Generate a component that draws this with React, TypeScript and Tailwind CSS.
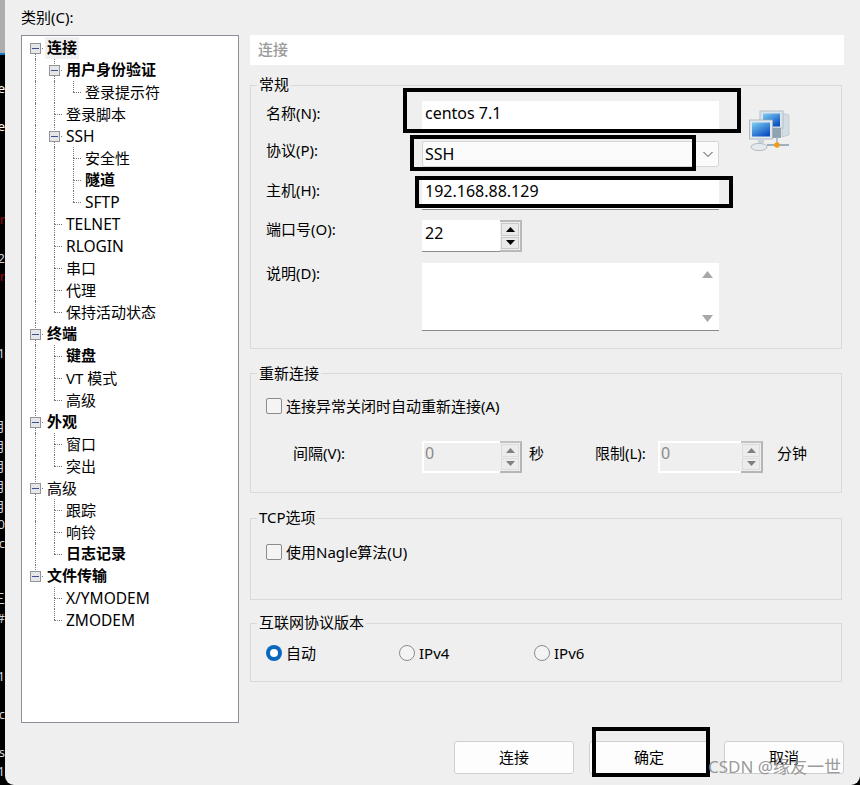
import type { ReactNode } from "react";

type Node = { label: string; bold?: boolean; selected?: boolean; latin?: boolean; children?: Node[] };

const tree: Node[] = [
  {
    label: "连接",
    bold: true,
    selected: true,
    children: [
      { label: "用户身份验证", bold: true, children: [{ label: "登录提示符" }] },
      { label: "登录脚本" },
      {
        label: "SSH",
        latin: true,
        children: [{ label: "安全性" }, { label: "隧道", bold: true }, { label: "SFTP", latin: true }],
      },
      { label: "TELNET", latin: true },
      { label: "RLOGIN", latin: true },
      { label: "串口" },
      { label: "代理" },
      { label: "保持活动状态" },
    ],
  },
  {
    label: "终端",
    bold: true,
    children: [{ label: "键盘", bold: true }, { label: "VT 模式" }, { label: "高级" }],
  },
  { label: "外观", bold: true, children: [{ label: "窗口" }, { label: "突出" }] },
  { label: "高级", children: [{ label: "跟踪" }, { label: "响铃" }, { label: "日志记录", bold: true }] },
  {
    label: "文件传输",
    bold: true,
    children: [
      { label: "X/YMODEM", latin: true },
      { label: "ZMODEM", latin: true },
    ],
  },
];

const terminalBits = [
  { y: 80, t: "e", c: "text-white" },
  { y: 118, t: "e", c: "text-white" },
  { y: 211, t: "r", c: "text-red-800" },
  { y: 250, t: "2", c: "text-gray-300" },
  { y: 268, t: "r", c: "text-red-800" },
  { y: 345, t: "1", c: "text-gray-300" },
  { y: 418, t: "月", c: "text-gray-300" },
  { y: 438, t: "月", c: "text-gray-300" },
  { y: 458, t: "月", c: "text-gray-300" },
  { y: 478, t: "月", c: "text-gray-300" },
  { y: 498, t: "月", c: "text-gray-300" },
  { y: 516, t: "0", c: "text-gray-300" },
  { y: 535, t: "c", c: "text-gray-300" },
  { y: 590, t: "三", c: "text-gray-300" },
  { y: 610, t: "#", c: "text-gray-300" },
  { y: 668, t: "1", c: "text-gray-300" },
  { y: 706, t: "c", c: "text-gray-300" },
  { y: 744, t: "s", c: "text-gray-300" },
  { y: 763, t: "1", c: "text-gray-300" },
];

const INDENT = [35, 54, 73];

function TreeRows({ nodes, level, guides }: { nodes: Node[]; level: number; guides: number[] }) {
  return (
    <>
      {nodes.map((n, i) => {
        const last = i === nodes.length - 1;
        const x = INDENT[level];
        return (
          <div key={n.label + i}>
            <div className="relative h-[22px]">
              {guides.map((g) => (
                <span key={g} className="absolute top-0 bottom-0 border-l border-dotted border-[#777]" style={{ left: g - 22 }} />
              ))}
              {(level > 0 || i > 0) && (
                <span className="absolute top-0 h-[11px] border-l border-dotted border-[#777]" style={{ left: x - 22 }} />
              )}
              {!last && (
                <span className="absolute top-[11px] bottom-0 border-l border-dotted border-[#777]" style={{ left: x - 22 }} />
              )}
              <span
                className="absolute top-[11px] w-[8px] border-t border-dotted border-[#777]"
                style={{ left: x - 22 }}
              />
              {n.children && (
                <span
                  className="absolute top-[6px] w-[11px] h-[11px] border border-[#949494] bg-[#e4e6ea] flex items-center justify-center"
                  style={{ left: x - 27 }}
                >
                  <span className="w-[7px] h-px bg-[#3f4f8f]" />
                </span>
              )}
              <span
                className={
                  "absolute top-0 h-[22px] whitespace-nowrap text-black " +
                  (n.bold ? "font-bold leading-[20px] " : "leading-[22px] ") +
                  (n.latin ? "text-[15.5px] " : "") +
                  (n.selected ? "bg-[#f0f0f0] px-[2px] -ml-[2px]" : "")
                }
                style={{ left: x - 10 }}
              >
                {n.label}
              </span>
            </div>
            {n.children && <TreeRows nodes={n.children} level={level + 1} guides={last ? guides : [...guides, x]} />}
          </div>
        );
      })}
    </>
  );
}

function Group({ title, className, legend, children }: { title: string; className: string; legend: string; children: ReactNode }) {
  return (
    <div className={"relative w-[592px] border border-[#d9d9d9] " + className}>
      <span className={"absolute left-[6px] h-[20px] leading-[20px] bg-[#efefef] px-[2px] whitespace-nowrap " + legend}>{title}</span>
      {children}
    </div>
  );
}

function Arrow({ up, disabled }: { up?: boolean; disabled?: boolean }) {
  return (
    <svg width="9" height="5" viewBox="0 0 9 5" className={disabled ? "text-[#808080]" : "text-black"}>
      <path d={up ? "M4.5 0 9 5H0z" : "M0 0h9L4.5 5z"} fill="currentColor" />
    </svg>
  );
}

function Spinner({ disabled }: { disabled?: boolean }) {
  return (
    <div
      className={
        "w-[22px] h-full shrink-0 flex flex-col gap-px p-px border-2 border-l-0 " +
        (disabled ? "border-[#b5b5b5] border-t-[#c2c2c2]" : "border-[#b9b9b9]")
      }
    >
      <div className={"flex-1 flex items-center justify-center border " + (disabled ? "bg-[#ececec] border-[#dcdcdc]" : "bg-[#e9e9e9] border-[#c9c9c9]")}>
        <Arrow up disabled={disabled} />
      </div>
      <div className={"flex-1 flex items-center justify-center border " + (disabled ? "bg-[#ececec] border-[#dcdcdc]" : "bg-[#e9e9e9] border-[#c9c9c9]")}>
        <Arrow disabled={disabled} />
      </div>
    </div>
  );
}

function DisabledNumber({ w }: { w: string }) {
  return (
    <div className="flex h-[32px]">
      <div className={"border-2 border-r-0 border-white bg-[#efefef] text-[16px] text-[#8a8a8a] pl-[1px] leading-[20px] " + w}>0</div>
      <Spinner disabled />
    </div>
  );
}

function Check({ label }: { label: string }) {
  return (
    <div className="flex items-center h-[16px] gap-[4px]">
      <span className="w-[16px] h-[16px] rounded-[2px] border border-[#8c8c8c] bg-[#f4f4f4]" />
      <span className="whitespace-nowrap leading-[16px]">{label}</span>
    </div>
  );
}

function Radio({ label, on, w }: { label: string; on?: boolean; w?: string }) {
  return (
    <div className={"flex items-center h-[16px] gap-[4px] " + (w ?? "")}>
      {on ? (
        <span className="w-[16px] h-[16px] rounded-full bg-[#0a67c0] flex items-center justify-center">
          <span className="w-[8px] h-[8px] rounded-full bg-white" />
        </span>
      ) : (
        <span className="w-[16px] h-[16px] rounded-full border border-[#8c8c8c] bg-[#f4f4f4]" />
      )}
      <span className="whitespace-nowrap leading-[16px]">{label}</span>
    </div>
  );
}

function NetworkIcon() {
  return (
    <svg width="42" height="42" viewBox="0 0 42 42">
      <defs>
        <linearGradient id="scr" x1="0" y1="0" x2="0.7" y2="1">
          <stop offset="0" stopColor="#7fd0f4" />
          <stop offset="1" stopColor="#0b4fc0" />
        </linearGradient>
      </defs>
      <path d="M33 3l7 2v20l-7 2z" fill="#d5dde4" stroke="#a9b4bd" strokeWidth="0.5" />
      <rect x="11" y="1" width="23" height="17" fill="#dbe4ea" stroke="#aab6bf" strokeWidth="0.8" />
      <rect x="14" y="3.5" width="17" height="13" fill="url(#scr)" />
      <rect x="20" y="18" width="12" height="10" fill="#8fa3b0" />
      <rect x="0.5" y="10" width="23" height="19" fill="#e0e8ee" stroke="#a3afb8" strokeWidth="0.8" />
      <rect x="3" y="12.5" width="18" height="14" fill="url(#scr)" />
      <path d="M9 29h6v4H9z" fill="#c9d3da" />
      <ellipse cx="10" cy="37" rx="8" ry="3.6" fill="#e4eaee" stroke="#a3afb8" strokeWidth="0.8" />
      <path d="M18 35h22" stroke="#9fb0bc" strokeWidth="2" />
      <path d="M28 27v7" stroke="#9fb0bc" strokeWidth="1.5" />
      <circle cx="28" cy="35" r="2.7" fill="#f39a12" />
    </svg>
  );
}

function Box({ className }: { className: string }) {
  return <div className={"absolute border-[4px] border-black pointer-events-none " + className} />;
}

const buttonCls =
  "w-[120px] h-[33px] rounded-[3px] border border-[#cfcfcf] bg-[#fdfdfd] flex items-center justify-center";

export default function App() {
  return (
    <div
      className="relative w-[860px] h-[785px] bg-black overflow-hidden flex text-[15px] text-black"
      style={{ fontFamily: '"Noto Sans", "Noto Sans CJK SC", sans-serif' }}
    >
      {/* terminal window behind the dialog */}
      <div className="relative w-[5px] shrink-0 overflow-hidden">
        <div className="h-[53px] bg-[#adadad]" />
        <div className="h-[2px] bg-[#1479c9]" />
        {terminalBits.map((b) => (
          <span
            key={b.y}
            className={"absolute right-0 text-[13px] leading-[16px] whitespace-nowrap " + b.c}
            style={{ top: b.y }}
          >
            {b.t}
          </span>
        ))}
      </div>

      <div className="flex-1 bg-[#efefef] rounded-b-[9px] pl-[16px] pt-[7px]">
        <div className="h-[20px] leading-[20px] mb-[8px]">类别(C):</div>
        <div className="flex items-start gap-[11px]">
          <div className="w-[218px] h-[688px] border border-[#8b8f9a] bg-white pt-px shrink-0">
            <div className="relative">
              <TreeRows nodes={tree} level={0} guides={[]} />
            </div>
          </div>

          <div className="flex-1 flex flex-col">
            <div className="w-[594px] h-[30px] bg-white pl-[8px] leading-[28px] text-[#9a9a9a] font-medium">连接</div>

            <Group title="常规" legend="-top-[12px]" className="mt-[20px] h-[264px] flex pl-[15px] pt-[15px]">
              <div className="w-[453px] flex flex-col">
                <div className="flex">
                  <span className="w-[156px] pt-[2px] leading-[20px]">名称(N):</span>
                  <div className="w-[297px] h-[30px] bg-white pl-[3px] text-[16px] leading-[25px] border-b border-[#e4e4e4]">centos 7.1</div>
                </div>
                <div className="flex mt-[10px]">
                  <span className="w-[156px] -mt-px leading-[20px]">协议(P):</span>
                  <div className="w-[297px] h-[26px] bg-[#fbfbfb] border border-[#d6d6d6] rounded-[2px] pl-[2px] text-[16px] leading-[24px] flex justify-between">
                    <span>SSH</span>
                    <svg width="20" height="24" viewBox="0 0 20 24" fill="none" stroke="#444" strokeWidth="1">
                      <path d="M5.5 10l4.5 4.5L14.5 10" />
                    </svg>
                  </div>
                </div>
                <div className="flex mt-[10px]">
                  <span className="w-[156px] pt-[3px] leading-[20px]">主机(H):</span>
                  <div className="w-[297px] h-[33px] bg-white pl-[3px] pt-[1px] text-[16px] leading-[26px] border-b border-[#8a8a8a]">192.168.88.129</div>
                </div>
                <div className="flex mt-[10px]">
                  <span className="w-[156px] -mt-px leading-[20px]">端口号(O):</span>
                  <div className="flex h-[32px]">
                    <div className="w-[78px] bg-white pl-[3px] text-[16px] leading-[27px] border-b border-[#8a8a8a]">22</div>
                    <Spinner />
                  </div>
                </div>
                <div className="flex mt-[11px]">
                  <span className="w-[156px] leading-[20px]">说明(D):</span>
                  <div className="relative w-[297px] h-[68px] bg-white border-b border-[#8a8a8a] flex flex-col justify-between items-end pr-[6px] py-[8px]">
                    <svg width="11" height="7" viewBox="0 0 11 7"><path d="M5.5 0 11 7H0z" fill="#a8a8a8" /></svg>
                    <svg width="11" height="7" viewBox="0 0 11 7"><path d="M0 0h11L5.5 7z" fill="#a8a8a8" /></svg>
                  </div>
                </div>
              </div>
              <div className="ml-[30px] pt-[9px]">
                <NetworkIcon />
              </div>
            </Group>

            <Group title="重新连接" legend="-top-[11px]" className="mt-[24px] h-[120px] pl-[15px] pt-[24px]">
              <Check label="连接异常关闭时自动重新连接(A)" />
              <div className="flex items-start leading-[24px] mt-[27px]">
                <span className="w-[156px] pl-[27px]">间隔(V):</span>
                <DisabledNumber w="w-[78px]" />
                <span className="ml-[7px] w-[66px]">秒</span>
                <span className="w-[63px]">限制(L):</span>
                <DisabledNumber w="w-[83px]" />
                <span className="ml-[14px]">分钟</span>
              </div>
            </Group>

            <Group title="TCP选项" legend="-top-[12px]" className="mt-[25px] h-[82px] pl-[15px] pt-[25px]">
              <Check label="使用Nagle算法(U)" />
            </Group>

            <Group title="互联网协议版本" legend="-top-[12px]" className="mt-[23px] h-[59px] pl-[15px] pt-[21px] flex">
              <Radio on label="自动" w="w-[133px]" />
              <Radio label="IPv4" w="w-[135px]" />
              <Radio label="IPv6" />
            </Group>

            <div className="flex mt-[59px] ml-[204px] gap-[15px]">
              <div className={buttonCls}>连接</div>
              <div className={buttonCls}>确定</div>
              <div className={buttonCls}>取消</div>
            </div>
          </div>
        </div>
      </div>

      {/* black annotation boxes drawn over the screenshot */}
      <Box className="left-[403px] top-[88px] w-[338px] h-[45px]" />
      <Box className="left-[410px] top-[135px] w-[286px] h-[36px]" />
      <Box className="left-[415px] top-[176px] w-[318px] h-[32px]" />
      <Box className="left-[592px] top-[727px] w-[118px] h-[50px]" />

      <span className="absolute left-[708px] top-[755px] text-[17px] leading-[24px] text-[#8d8d8d]/90 whitespace-nowrap">
        CSDN @缘友一世
      </span>
    </div>
  );
}
